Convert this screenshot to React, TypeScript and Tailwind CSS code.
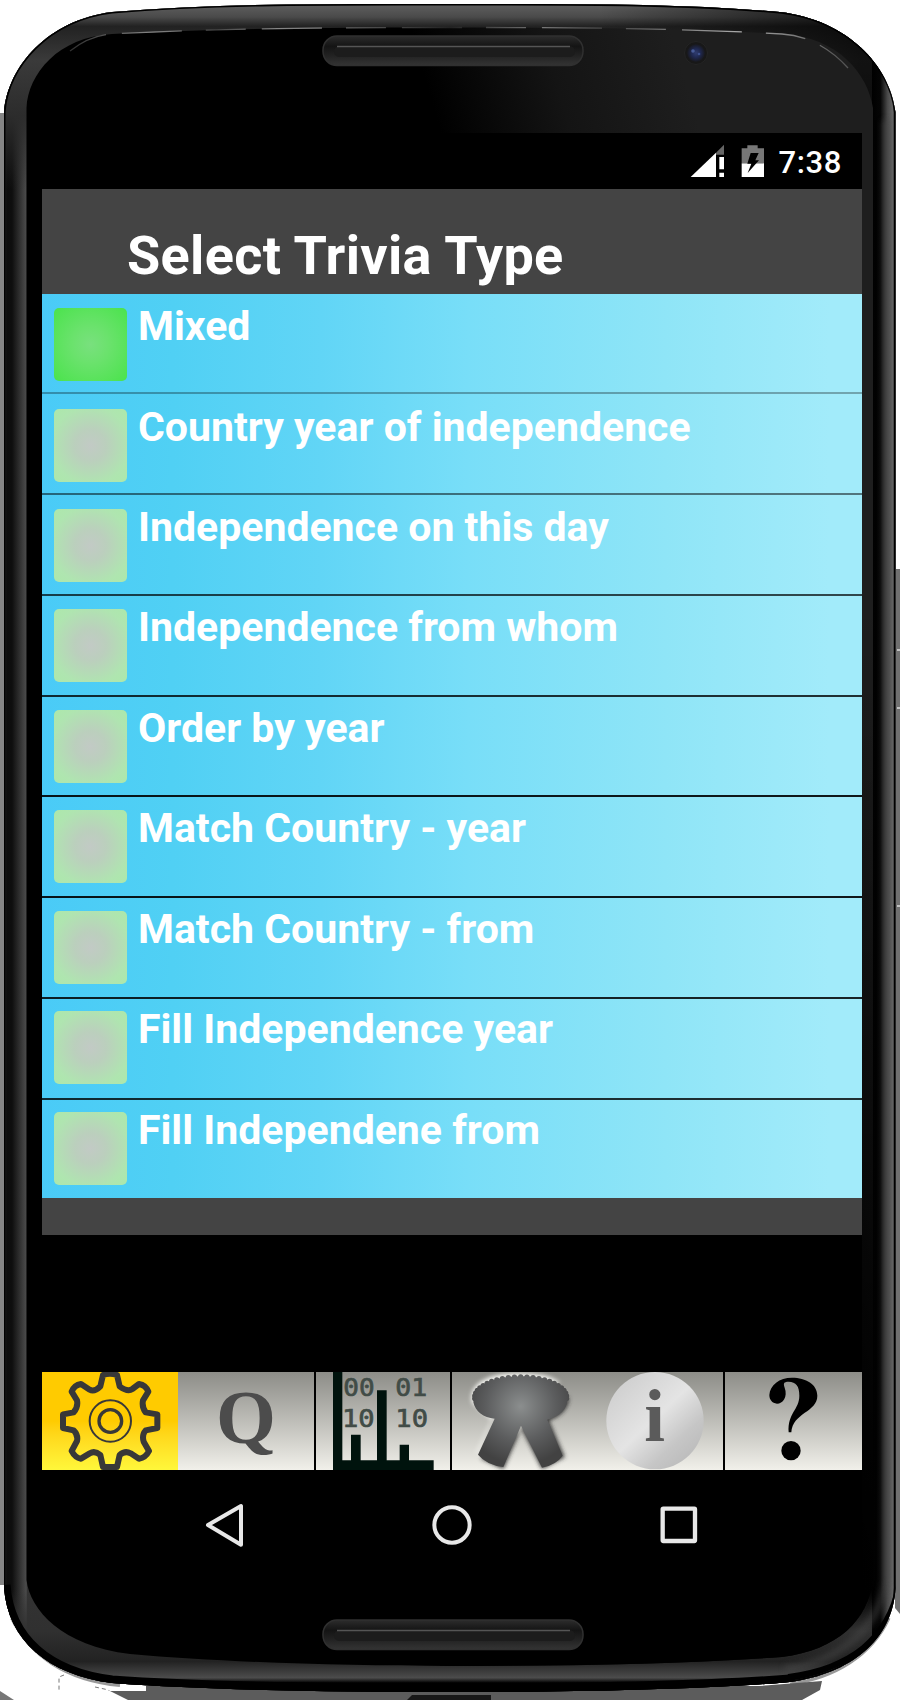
import React from "react";

const rows = [
  { label: "Mixed", line: "border-black/30", box: "h-[100px] pt-[14px]" },
  { label: "Country year of independence", line: "border-black/50", box: "h-[101px] pt-[15px]" },
  { label: "Independence on this day", line: "border-black/70", box: "h-[101px] pt-[14px]" },
  { label: "Independence from whom", line: "border-black/80", box: "h-[101px] pt-[13px]" },
  { label: "Order by year", line: "border-black/90", box: "h-[100px] pt-[13px]" },
  { label: "Match Country - year", line: "border-black/90", box: "h-[101px] pt-[13px]" },
  { label: "Match Country - from", line: "border-black/85", box: "h-[101px] pt-[13px]" },
  { label: "Fill Independence year", line: "border-black/80", box: "h-[101px] pt-[12px]" },
  { label: "Fill Independene from", line: "border-transparent", box: "h-[98px] pt-[12px]" },
];

const BODY =
  "M4 112 C8 66 48 20 112 12 C220 3 330 4 450 4 C570 4 680 3 780 12 C848 20 890 66 895.500 112 V1588 C893 1640 850 1674 790 1682 C700 1690 560 1692 450 1692 C330 1692 210 1690 112 1683 C48 1675 8 1640 4 1588 Z";
const GLASS =
  "M26.500 108 C28 74 58 37 112 34 C220 28 340 27.500 450 27.500 C570 27.500 680 28 782 34 C838 37 868 74 873 108 V1580 C868 1620 838 1650 782 1657 C680 1664 570 1666 450 1666 C340 1666 220 1662 130 1654 C62 1646 30 1610 26.500 1580 Z";

function PhoneFrame() {
  return (
    <svg className="absolute inset-0" width="900" height="1700" viewBox="0 0 900 1700" aria-hidden="true">
      <defs>
        <linearGradient id="sideL" x1="4" x2="27" gradientUnits="userSpaceOnUse">
          <stop offset="0" stopColor="#333" />
          <stop offset="0.12" stopColor="#0c0c0c" />
          <stop offset="0.35" stopColor="#0e0e0e" />
          <stop offset="0.8" stopColor="#3c3c3c" />
          <stop offset="0.97" stopColor="#4c4c4c" />
          <stop offset="1" stopColor="#333" />
        </linearGradient>
        <linearGradient id="sideR" x1="872" x2="896" gradientUnits="userSpaceOnUse">
          <stop offset="0" stopColor="#000" />
          <stop offset="0.35" stopColor="#050505" />
          <stop offset="0.65" stopColor="#4a4a4a" />
          <stop offset="0.87" stopColor="#666" />
          <stop offset="0.93" stopColor="#222" />
          <stop offset="1" stopColor="#222" />
        </linearGradient>
        <linearGradient id="rimTop" y1="4" y2="190" x1="0" x2="0" gradientUnits="userSpaceOnUse">
          <stop offset="0" stopColor="#606060" />
          <stop offset="0.07" stopColor="#4a4a4a" />
          <stop offset="0.12" stopColor="#222" />
          <stop offset="0.3" stopColor="#3a3a3a" />
          <stop offset="0.6" stopColor="#2c2c2c" />
          <stop offset="1" stopColor="#2a2a2a" stopOpacity="0" />
        </linearGradient>
        <linearGradient id="rimTopRight" x1="600" x2="860" y1="0" y2="0" gradientUnits="userSpaceOnUse">
          <stop offset="0" stopColor="#000" stopOpacity="0" />
          <stop offset="1" stopColor="#000" stopOpacity="0.7" />
        </linearGradient>
        <linearGradient id="rimBottom" y1="1590" y2="1692" x1="0" x2="0" gradientUnits="userSpaceOnUse">
          <stop offset="0" stopColor="#303030" stopOpacity="0" />
          <stop offset="0.4" stopColor="#303030" />
          <stop offset="0.7" stopColor="#222" />
          <stop offset="0.86" stopColor="#4c4c4c" />
          <stop offset="0.91" stopColor="#000" />
          <stop offset="1" stopColor="#000" />
        </linearGradient>
        <linearGradient id="glass" x1="440" x2="680" y1="130" y2="60" gradientUnits="userSpaceOnUse">
          <stop offset="0" stopColor="#000" />
          <stop offset="0.5" stopColor="#141414" />
          <stop offset="1" stopColor="#1e1e1e" />
        </linearGradient>
        <linearGradient id="glassFade" x1="0" x2="0" y1="600" y2="1500" gradientUnits="userSpaceOnUse">
          <stop offset="0" stopColor="#000" stopOpacity="0" />
          <stop offset="1" stopColor="#000" stopOpacity="0.8" />
        </linearGradient>
        <linearGradient id="glint" x1="60" x2="840" y1="0" y2="0" gradientUnits="userSpaceOnUse">
          <stop offset="0" stopColor="#666" stopOpacity="0.4" />
          <stop offset="0.12" stopColor="#888" />
          <stop offset="0.2" stopColor="#444" />
          <stop offset="0.28" stopColor="#888" />
          <stop offset="0.5" stopColor="#222" />
          <stop offset="0.62" stopColor="#777" />
          <stop offset="0.7" stopColor="#444" />
          <stop offset="0.87" stopColor="#aaa" />
          <stop offset="1" stopColor="#555" />
        </linearGradient>
        <linearGradient id="slot" x1="0" x2="0" y1="0" y2="1">
          <stop offset="0" stopColor="#2c2c2c" />
          <stop offset="0.35" stopColor="#141414" />
          <stop offset="0.7" stopColor="#242424" />
          <stop offset="1" stopColor="#343434" />
        </linearGradient>
        <radialGradient id="lens">
          <stop offset="0" stopColor="#2f3c70" />
          <stop offset="0.5" stopColor="#1f2850" />
          <stop offset="1" stopColor="#18181c" />
        </radialGradient>
        <filter id="soft"><feGaussianBlur stdDeviation="3" /></filter>
        <clipPath id="bodyClip"><path d={BODY} /></clipPath>
      </defs>
      <rect width="900" height="1700" fill="#fff" />
      <rect x="0" y="113" width="4.500" height="1472" fill="#858585" />
      <path d="M896 569 H900 V1614 L895 1608 Z" fill="#707070" />
      <path d="M897 650 H900 M897 708 H900 M897 906 H900" stroke="#ddd" strokeWidth="1.500" />
      <path d="M12 1618 C30 1655 66 1680 120 1685" fill="none" stroke="#999" strokeWidth="4" />
      <path d="M889 1618 C872 1655 835 1678 790 1684" fill="none" stroke="#999" strokeWidth="3" />
      <path d="M64 1675 L59 1677 V1690 M95 1687 L118 1692 L130 1700" stroke="#777" strokeWidth="1" strokeDasharray="4 3" fill="none" />
      <path d="M0 1691 L14 1700 H0 Z" fill="#777" />
      <path d="M108 1690 L146 1690 V1686 H760 L822 1681 L820 1690 L802 1700 H128 Z" fill="#5c5c5c" />
      <path d="M104 1687 L146 1688 V1691 H110 Z" fill="#fff" />
      <path d="M407 1700 L412 1695 H491 V1700 Z" fill="#181818" />
      <path d={BODY} fill="#202020" />
      <g clipPath="url(#bodyClip)">
        <rect x="0" y="0" width="450" height="1700" fill="url(#sideL)" />
        <rect x="450" y="0" width="450" height="1700" fill="url(#sideR)" />
        <rect x="0" y="0" width="872" height="190" fill="url(#rimTop)" />
        <rect x="600" y="0" width="272" height="190" fill="url(#rimTopRight)" />
        <rect x="0" y="1590" width="872" height="110" fill="url(#rimBottom)" />
        <path d="M886 120 V1580 C880 1625 842 1662 785 1669" fill="none" stroke="#4a4a4a" strokeWidth="7" opacity="0.55" filter="url(#soft)" />
        <path d={BODY} fill="none" stroke="#000" strokeWidth="3" />
        <path d="M4 1585 C8 1640 48 1674 112 1682 C210 1689 330 1690 450 1690 C560 1690 700 1688 790 1681" fill="none" stroke="#000" strokeWidth="13" />
        <path d="M785 1681.500 C850 1673 893 1640 896 1585 C886 1636 850 1666 788 1674 Z" fill="#000" />
      </g>
      <path d={GLASS} fill="url(#glass)" />
      <path d="M440 600 H873 V1580 C868 1620 838 1650 782 1657 C680 1664 570 1666 440 1666 Z" fill="url(#glassFade)" />
      <path d="M70 51 C84 40 97 35 112 34 C220 28 340 27.500 450 27.500 C570 27.500 680 28 782 34 C810 36 832 50 848 68" fill="none" stroke="url(#glint)" strokeWidth="1.300" strokeDasharray="40 16 60 24" />
      {[36, 1620].map((y) => (
        <g key={y}>
          <rect x="323" y={y} width="260" height="29.500" rx="14" fill="url(#slot)" stroke="#303030" strokeWidth="1.500" />
          <rect x="334" y={y + 10} width="241" height="11" rx="5.500" fill="#1c1c1c" />
          <path d={`M337 ${y + 10.5} H570`} stroke="#555" strokeWidth="1.500" />
        </g>
      ))}
      <circle cx="696" cy="53" r="11.500" fill="#181818" stroke="#242424" />
      <circle cx="696" cy="53" r="9" fill="url(#lens)" />
      <circle cx="693" cy="51" r="1.800" fill="#485c98" />
      <circle cx="699" cy="54" r="1.300" fill="#3d4f8b" />
    </svg>
  );
}

function StatusBar() {
  return (
    <div className="flex h-[56px] items-start justify-end bg-black pr-[20px]">
      <svg className="mt-[11px]" width="36" height="34" viewBox="720 432 108 102" aria-hidden="true">
        <path d="M822 434 V464 H798 V458 Z" fill="#666" />
        <path d="M722 531 L798 458 V531 Z" fill="#fff" />
        <path d="M808 471 H822 V508 H808 Z M808 518 H822 V531 H808 Z" fill="#fff" />
      </svg>
      <svg className="ml-[15px] mt-[11px]" width="24" height="34" viewBox="874 432 72 102" aria-hidden="true">
        <path d="M876 445 H893 V436 H924 V445 H943 V490 H876 Z" fill="#777" />
        <path d="M876 490 H943 V531 H876 Z" fill="#fff" />
        <path d="M903 459 H927 L917 481 H928 L894 519 L905 491 H893 Z" fill="#000" />
      </svg>
      <span className="ml-[14px] mt-[12px] text-[31px] font-medium leading-[36px] tracking-[0.6px] text-white">7:38</span>
    </div>
  );
}

const GEAR =
  "M310 46 Q331 38 352 46 L360 80 Q384 98 398 88 L418 73 Q438 76 446 96 L430 122 Q426 142 438 158 L473 164 V205 L438 212 Q426 226 432 246 L448 274 Q438 294 418 297 L393 281 Q376 272 360 286 L352 322 H310 L302 286 Q286 272 270 281 L244 297 Q226 294 216 274 L232 244 Q236 226 222 212 L190 205 V164 L222 158 Q236 142 232 122 L216 96 Q224 76 244 73 L270 90 Q284 98 302 80 Z";

const SCALLOPS = Array.from({ length: 25 }, (_, i) => {
  const a = Math.PI * (0.98 + (i / 24) * 1.04);
  return { x: 212 + 138 * Math.cos(a), y: 113 + 61 * Math.sin(a) };
});

function TabBar() {
  const silver = "bg-linear-to-b from-[#8d8d88] to-[#f1f0ea]";
  return (
    <div className="flex h-[98px] bg-black">
      <div className="h-full w-[136px] bg-linear-to-b from-[#ffcb00] from-50% to-[#fff73a]">
        <svg className="block" width="136" height="98" viewBox="127 37 408 294" aria-hidden="true">
          <g fill="none" stroke="#383838" strokeLinejoin="round">
            <path d={GEAR} strokeWidth="18" />
            <circle cx="332" cy="184" r="62" strokeWidth="6" />
            <circle cx="332" cy="184" r="34" strokeWidth="10" />
          </g>
        </svg>
      </div>
      <div className={`flex h-full w-[136px] items-start justify-center overflow-hidden ${silver}`}>
        <span className="font-['Liberation_Serif',serif] text-[77px] font-bold leading-[90px] text-[#4c4c4c]">Q</span>
      </div>
      <div className={`ml-[2px] h-full w-[134px] ${silver}`}>
        <svg className="block" width="134" height="98" viewBox="948 37 402 294" aria-hidden="true">
          <path fill="#00130d" d="M999 37 H1027 V302 H1053 V225 H1082 V302 H1131 V92 H1160 V302 H1199 V255 H1227 V302 H1301 V331 H999 Z" />
          <g fill="#414c47" stroke="#414c47" strokeWidth="2" fontFamily="'DejaVu Sans Mono', monospace" fontSize="76">
            <text x="1030" y="109" textLength="94" lengthAdjust="spacingAndGlyphs">00</text>
            <text x="1186" y="109" textLength="96" lengthAdjust="spacingAndGlyphs">01</text>
            <text x="1026" y="201" textLength="98" lengthAdjust="spacingAndGlyphs">10</text>
            <text x="1186" y="201" textLength="98" lengthAdjust="spacingAndGlyphs">10</text>
          </g>
        </svg>
      </div>
      <div className={`ml-[2px] h-full w-[136px] ${silver}`}>
        <svg className="block" width="136" height="98" viewBox="6 37 408 294" aria-hidden="true">
          <defs>
            <radialGradient id="ribbon" cx="212" cy="140" r="175" gradientUnits="userSpaceOnUse">
              <stop offset="0" stopColor="#8b8e8e" />
              <stop offset="0.6" stopColor="#5c5d5e" />
              <stop offset="1" stopColor="#424242" />
            </radialGradient>
            <filter id="ribbonGlow"><feGaussianBlur stdDeviation="6" /></filter>
          </defs>
          <g filter="url(#ribbonGlow)">
            <path d="M66 130 C52 70 120 38 210 40 C270 40 310 50 330 70 L130 130 L130 175 L84 280 L78 280 L124 180 Z" fill="#f4f4f0" />
            <path d="M356 110 C360 150 320 175 296 182 L344 292 L276 328 L214 204 L160 328 L92 296 Z" fill="#333" />
          </g>
          <g fill="url(#ribbon)">
            {SCALLOPS.map((s, i) => (
              <circle key={i} cx={s.x} cy={s.y} r="8" />
            ))}
            <path d="M70 128 C74 70 140 50 212 50 C284 50 350 70 352 118 C352 150 330 170 292 180 L338 288 Q318 316 276 324 L213 198 L160 322 Q110 316 84 285 L134 177 C100 174 76 156 70 128 Z" />
          </g>
        </svg>
      </div>
      <div className={`h-full w-[135px] ${silver}`}>
        <svg className="block" width="135" height="98" viewBox="414 37 405 294" aria-hidden="true">
          <defs>
            <linearGradient id="disc" x1="0.1" y1="0.1" x2="0.85" y2="0.9">
              <stop offset="0" stopColor="#cecece" />
              <stop offset="0.5" stopColor="#e4e4e4" />
              <stop offset="0.8" stopColor="#c6c6c6" />
              <stop offset="1" stopColor="#bcbcbc" />
            </linearGradient>
          </defs>
          <circle cx="615" cy="183" r="146" fill="url(#disc)" />
          <text x="614" y="244" textAnchor="middle" fill="#5b5b5b" fontFamily="'Liberation Serif', serif" fontWeight="bold" fontSize="224">i</text>
        </svg>
      </div>
      <div className={`ml-[2px] h-full flex-1 ${silver}`}>
        <svg className="block" width="137" height="98" viewBox="827 37 411 294" aria-hidden="true">
          <circle cx="1025" cy="273" r="29" fill="#000" />
          <path d="M1018 218 C1014 160 1050 150 1050 108 C1050 78 1040 67 1018 66 C1002 66 1002 72 1006 84 C1016 112 1000 132 983 132 C968 131 960 119 960 106 C962 76 990 54 1028 54 C1070 54 1104 74 1104 108 C1104 158 1030 158 1026 218 Z" fill="#000" />
        </svg>
      </div>
    </div>
  );
}

function NavBar() {
  return (
    <div className="flex h-[110px] items-start bg-black pl-[160px] pt-[32px]">
      <svg width="46" height="46" viewBox="606 66 138 138" aria-hidden="true">
        <path d="M624 135 L723 78 V194 Z" fill="none" stroke="#e8e8e8" strokeWidth="12" strokeLinejoin="round" />
      </svg>
      <svg className="ml-[181px]" width="46" height="46" viewBox="-61 66 138 138" aria-hidden="true">
        <circle cx="8" cy="135" r="53" fill="none" stroke="#e8e8e8" strokeWidth="12" />
      </svg>
      <svg className="ml-[181px]" width="46" height="46" viewBox="619 66 138 138" aria-hidden="true">
        <rect x="639" y="86" width="97" height="97" rx="2" fill="none" stroke="#e8e8e8" strokeWidth="13" />
      </svg>
    </div>
  );
}

export default function App() {
  return (
    <div className="relative h-[1700px] w-[900px] overflow-hidden bg-white font-['Roboto',sans-serif]">
      <PhoneFrame />
      <main className="relative ml-[42px] flex w-[820px] flex-col pt-[133px]">
        <StatusBar />
        <header className="h-[105px] bg-[#444] pl-[85px] pt-[35px]">
          <h1 className="whitespace-nowrap text-[54px] font-bold leading-[64px] tracking-[0.33px] text-white">Select Trivia Type</h1>
        </header>
        <ul className="flex flex-col">
          {rows.map((row, i) => (
            <li
              key={row.label}
              className={`flex items-start border-b-2 bg-[linear-gradient(91deg,#4acbf7_0%,#50d0f4_16%,#61d5f6_34%,#78def8_52%,#8fe5f7_76%,#a2ebfa_96%,#a2ebfa_100%)] bg-origin-border pl-[12px] ${row.box} ${row.line}`}
            >
              <span
                className={`size-[73px] shrink-0 rounded-[5px] ${
                  i === 0
                    ? "bg-[radial-gradient(circle,#79e07e_0%,#6be26d_35%,#4ae34c_100%)]"
                    : "bg-[radial-gradient(circle,#c2cac5_0%,#bbcfbd_30%,#afe5b0_75%,#ace8ab_100%)]"
                }`}
              />
              <span className="-mt-[6px] ml-[11px] whitespace-nowrap text-[41px] font-bold leading-[48px] text-white">{row.label}</span>
            </li>
          ))}
        </ul>
        <div className="h-[37px] bg-[#444]" />
        <div className="h-[137px] bg-black" />
        <TabBar />
        <NavBar />
      </main>
    </div>
  );
}
